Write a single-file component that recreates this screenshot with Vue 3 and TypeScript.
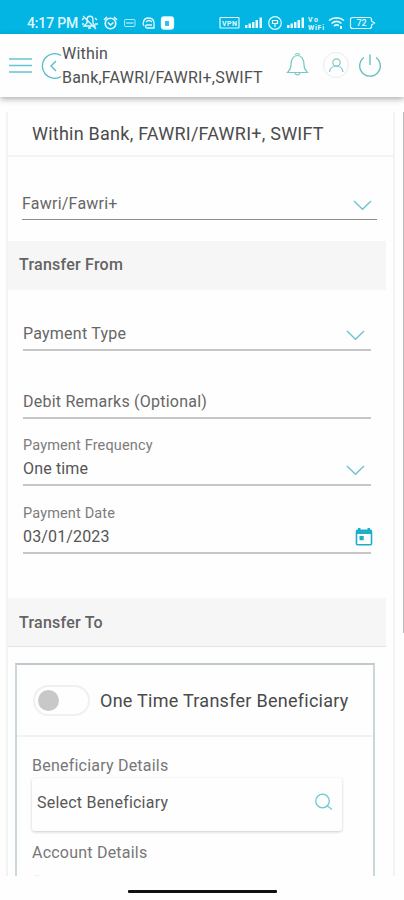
<script setup lang="ts">
import { ref } from 'vue'

interface Field {
  label?: string
  value: string
  kind: 'select' | 'text' | 'date'
  cls: string
}

const title = 'Within Bank, FAWRI/FAWRI+, SWIFT'
const fields: Field[] = [
  { value: 'Payment Type', kind: 'select', cls: 'f-type' },
  { value: 'Debit Remarks (Optional)', kind: 'text', cls: 'f-remarks' },
  { label: 'Payment Frequency', value: 'One time', kind: 'select', cls: 'f-freq' },
  { label: 'Payment Date', value: '03/01/2023', kind: 'date', cls: 'f-date' },
]
const oneTime = ref(false)
</script>

<template>
  <div class="phone">
    <div class="status">
      <span class="time">4:17 PM</span>
      <svg class="st-left" width="94" height="18" viewBox="81 14 94 18" fill="none" stroke="#e6faff" stroke-width="1.3">
        <path d="M84 26h11l-2-3v-3c0-5-6-5-6 0v3zM88 28h3M83 16l13 13M82 20l2-2M97 20l-2-2M82 24h2M95 24h3" />
        <circle cx="110.500" cy="23.500" r="5.300" stroke-width="1.600" />
        <path d="M104 20l3-3M117 20l-3-3M108 22.500l2.500 2.500 3-2.500" stroke-width="1.600" />
        <rect x="124.500" y="19.500" width="10.500" height="7" rx="1" stroke-width="1" opacity=".75" />
        <path d="M126 23h7.500" opacity=".75" />
        <path d="M144 26c-2-3 0-8 4-8s6 2 6 5v5h-7c-2 0-2-3 0-3h5M146 22c2-2 4-2 6 0" />
        <rect x="161.500" y="17" width="12" height="12" rx="2.500" fill="#fff" />
        <path d="M165 21h4v5h-4z" fill="#35bfe5" stroke="none" />
      </svg>
      <svg class="st-right" width="158" height="18" viewBox="218 14 158 18" fill="none" stroke="#e6faff" stroke-width="1.2">
        <rect x="220" y="17.500" width="19" height="10.500" rx=".5" />
        <text x="222" y="25.800" class="tiny" textLength="15">VPN</text>
        <g fill="#e6faff" stroke="none">
          <path d="M245 25h2.500v3H245zM248.500 23.500h2.500V28h-2.500zM252 22h2.500v6H252zM255.500 20h2.500v8h-2.500zM259.500 17.500h2.500V28h-2.500z" />
          <path d="M287 25h2.500v3H287zM290.500 23.500h2.500V28h-2.500zM294 22h2.500v6H294zM297.500 20h2.500v8h-2.500zM301.500 17.500h2.500V28h-2.500z" />
        </g>
        <circle cx="275" cy="23" r="6.300" />
        <path d="M272.500 20.500h5v3h-5zM275 23.500v3.500" />
        <text x="308" y="22" class="tiny" textLength="10">Vo</text>
        <text x="308" y="29.500" class="tiny" textLength="16">WiFi</text>
        <path d="M329 20.500c4-3.500 11-3.500 15 0M331.500 23.500c3-2.500 7-2.500 10 0M334 26c2-1.500 3.500-1.500 5 0" stroke-width="1.600" />
        <path d="M336.500 28.500h.1M341 26v3" stroke-width="2" />
        <path d="M352.500 17.500h17q2 0 2 2v1.500l3 2-3 2v1.500q0 2-2 2h-17q-2 0-2-2v-7q0-2 2-2z" />
        <text x="356.500" y="26" class="tiny big">72</text>
      </svg>
    </div>

    <header class="header">
      <svg class="burger" width="24" height="16" viewBox="0 0 24 16" stroke="#67c4d2" stroke-width="1.300">
        <path d="M1 2h23M1 8.500h23M1 15h23" />
      </svg>
      <svg class="back" width="22" height="28" viewBox="0 0 22 28" fill="none" stroke="#50bdcc" stroke-width="1.300">
        <path d="M21 3.500A12.300 12.300 0 1 0 21 24.500M16 9l-5 5 5 5" />
      </svg>
      <h1 class="crumb">Within<br />Bank,FAWRI/FAWRI+,SWIFT</h1>
      <svg class="bell" width="24" height="26" viewBox="285 52 24 26" fill="none" stroke="#7bc8c6" stroke-width="1.200">
        <path d="M287.500 72.500h20c-2-2-3.500-3-3.500-8 0-5-2.500-9-6.500-9s-6.500 4-6.500 9c0 5-1.500 6-3.500 8zM295.500 55c0-2 4-2 4 0M295 73c1 2.500 4 2.500 5 0" />
      </svg>
      <svg class="user" width="28" height="28" viewBox="322 51 28 28" fill="none">
        <circle cx="336" cy="65" r="12.500" stroke="#e9ecec" />
        <circle cx="336.500" cy="62.500" r="3.700" stroke="#7bc8c6" stroke-width="1.200" />
        <path d="M329.500 72c1-8 12.500-8 13.500 0" stroke="#7bc8c6" stroke-width="1.200" />
      </svg>
      <svg class="power" width="24" height="26" viewBox="358 52 24 26" fill="none" stroke="#68bfc0" stroke-width="1.400">
        <path d="M370 54.500V65M364 57.500a10.300 10.300 0 1 0 12 0" />
      </svg>
    </header>

    <main class="content">
      <div class="card">
        <h2 class="title"><span>{{ title }}</span></h2>
        <div class="field f-fawri">
          <div class="value">Fawri/Fawri+</div>
          <svg class="chev" width="19" height="11" viewBox="0 0 19 11"><path d="M1 1l8.500 8.300L18 1" /></svg>
        </div>
        <h3 class="section from"><span>Transfer From</span></h3>
        <div class="form">
          <div v-for="f in fields" :key="f.cls" class="field" :class="f.cls">
            <div class="stack">
              <div v-if="f.label" class="label"><span>{{ f.label }}</span></div>
              <div class="value"><span>{{ f.value }}</span></div>
            </div>
            <svg v-if="f.kind === 'select'" class="chev" width="19" height="11" viewBox="0 0 19 11"><path d="M1 1l8.500 8.300L18 1" /></svg>
            <svg v-if="f.kind === 'date'" class="cal" width="18" height="18" viewBox="0 0 18 18">
              <path fill="#1daeca" fill-rule="evenodd" d="M3 0h2.500v1.500h7V0H15v1.500h.5A1.800 1.800 0 0 1 17.300 3.300v12.400a1.800 1.800 0 0 1-1.800 1.800h-13A1.800 1.800 0 0 1 .7 15.700V3.300A1.800 1.800 0 0 1 2.500 1.500H3zM2.300 6v9.900h13.400V6zM4.500 8h4.200v4.200H4.500z" />
            </svg>
          </div>
        </div>
        <h3 class="section to"><span>Transfer To</span></h3>
        <div class="benef">
          <div class="toggle-row">
            <button class="toggle" :class="{ on: oneTime }" @click="oneTime = !oneTime"><i></i></button>
            <span class="toggle-text">One Time Transfer Beneficiary</span>
          </div>
          <div class="sub bd"><span>Beneficiary Details</span></div>
          <div class="search">
            <span>Select Beneficiary</span>
            <svg width="19" height="18" viewBox="0 0 19 18" fill="none" stroke="#6cc9d2" stroke-width="1.300">
              <circle cx="8.500" cy="8" r="6.800" /><path d="M13 12.500l5 4" />
            </svg>
          </div>
          <div class="sub ad"><span>Account Details</span></div>
          <div class="next"></div>
        </div>
      </div>
      <div class="scroll"></div>
    </main>
    <div class="nav"><i></i></div>
  </div>
</template>

<style>
body { background: #fefefe; }
</style>

<style scoped>
* { box-sizing: border-box; }
.phone { width: 404px; height: 900px; display: flex; flex-direction: column; overflow: hidden; background: #fefefe; font-family: Roboto, "Liberation Sans", sans-serif; color: #555; }
svg { display: block; flex: none; }
h1, h2, h3 { margin: 0; font-weight: 400; }
.status { height: 34px; flex: none; background: #02b5e2; display: flex; padding: 14px 0 0 27px; }
.time { width: 54px; font-size: 14px; line-height: 18px; font-weight: 500; color: #dff7ff; white-space: nowrap; letter-spacing: -.15px; }
.st-right { margin-left: 43px; }
.tiny { font: 700 7px Roboto, sans-serif; fill: #e6faff; stroke: none; }
.big { font-size: 9px; font-weight: 500; }
.header { height: 63px; flex: none; display: flex; align-items: flex-start; background: #fefefe; position: relative; z-index: 2; box-shadow: 0 2px 6px rgba(0, 0, 0, .32); padding-left: 8px; }
.burger { margin-top: 23px; }
.back { margin: 18px 0 0 8px; }
.crumb { width: 223px; font-size: 16px; line-height: 24px; padding-top: 8px; letter-spacing: .22px; color: #505050; white-space: nowrap; }
.bell { margin-top: 18px; }
.user { margin: 17px 0 0 13px; }
.power { margin: 18px 0 0 8px; }
.content { height: 779px; flex: none; overflow: hidden; display: flex; justify-content: space-between; margin-top: 0; padding: 15px 0 0 6px; }
.card { width: 389px; height: 900px; border-left: 2px solid #f3f3f3; border-right: 2px solid #f3f3f3; }
.scroll { width: 1px; height: 521px; background: #bcbcbc; }
.title { height: 45px; border-bottom: 2px solid #f4f4f4; padding-left: 24px; font-size: 18px; line-height: 43px; letter-spacing: .24px; color: #4c4c4c; white-space: nowrap; }
.field { display: flex; justify-content: space-between; align-items: flex-end; border-bottom: 2px solid #c6c6c6; }
.value, .label { white-space: nowrap; }
.value { font-size: 16px; line-height: 20px; letter-spacing: .23px; color: #666; }
.label { font-size: 14.5px; line-height: 18px; letter-spacing: .15px; color: #7c7c7c; }
.chev { fill: none; stroke: #6bc5d2; stroke-width: 1.400; }
.f-fawri { width: 355px; height: 63px; margin-left: 14px; border-bottom: 1px solid #8c8c8c; padding: 0 5px 5px 0; }
.f-fawri .chev { margin-bottom: 3px; }
.section { width: 378px; background: #f6f6f6; padding-left: 11px; font-size: 16px; font-weight: 500; letter-spacing: .23px; color: #636363; white-space: nowrap; }
.from { height: 49px; line-height: 47px; margin-top: 21px; }
.form { width: 348px; margin-left: 15px; display: flex; flex-direction: column; }
.form .field { padding: 0 6px 5px 0; }
.form .field .chev { margin-bottom: 3px; }
.f-type { height: 61px; }
.f-remarks { height: 68px; }
.f-freq { height: 67px; }
.f-date { height: 68px; }
.form .f-date { padding-right: 0; }
.form .cal { margin: 0 -2px 1px 0; }
.f-freq .value, .f-date .value { color: #555; letter-spacing: .15px; }
.f-freq .label, .f-date .label { margin-bottom: 4px; }
.to { height: 49px; line-height: 49px; margin-top: 44px; border-bottom: 1px solid #e4e4e4; }
.benef { width: 360px; height: 300px; margin: 16px 0 0 7px; border: 2px solid #c9d8dc; border-top-color: #c2c9cd; }
.toggle-row { height: 72px; display: flex; align-items: center; border-bottom: 2px solid #f0f3f4; }
.toggle { width: 57px; height: 31px; margin-left: 16px; flex: none; border: 2px solid #f0f0f0; border-radius: 16px; background: #fefefe; padding: 3px; display: flex; align-items: center; }
.toggle.on { justify-content: flex-end; }
.toggle i { width: 21px; height: 21px; border-radius: 50%; background: #c8c8c8; }
.toggle-text { margin-left: 10px; font-size: 18px; letter-spacing: .27px; color: #4a4a4a; white-space: nowrap; }
.sub { font-size: 16px; line-height: 20px; margin-left: 15px; letter-spacing: .22px; color: #777; white-space: nowrap; }
.bd { margin-top: 19px; }
.search { width: 310px; height: 53px; margin: 2px 0 0 15px; border-radius: 3px; background: #fefefe; box-shadow: 0 1px 3px rgba(0, 0, 0, .2); display: flex; justify-content: space-between; padding: 15px 9px 0 5px; font-size: 16px; line-height: 20px; letter-spacing: .22px; color: #585858; white-space: nowrap; }
.ad { margin-top: 12px; }
.next { width: 10px; height: 10px; margin: 12px 0 0 15px; border-radius: 50%; border: 1px solid #e9e9e9; }
.nav { height: 24px; flex: none; display: flex; justify-content: center; padding-top: 14px; }
.nav i { width: 149px; height: 3px; background: #111; border-radius: 1px; }
</style>
